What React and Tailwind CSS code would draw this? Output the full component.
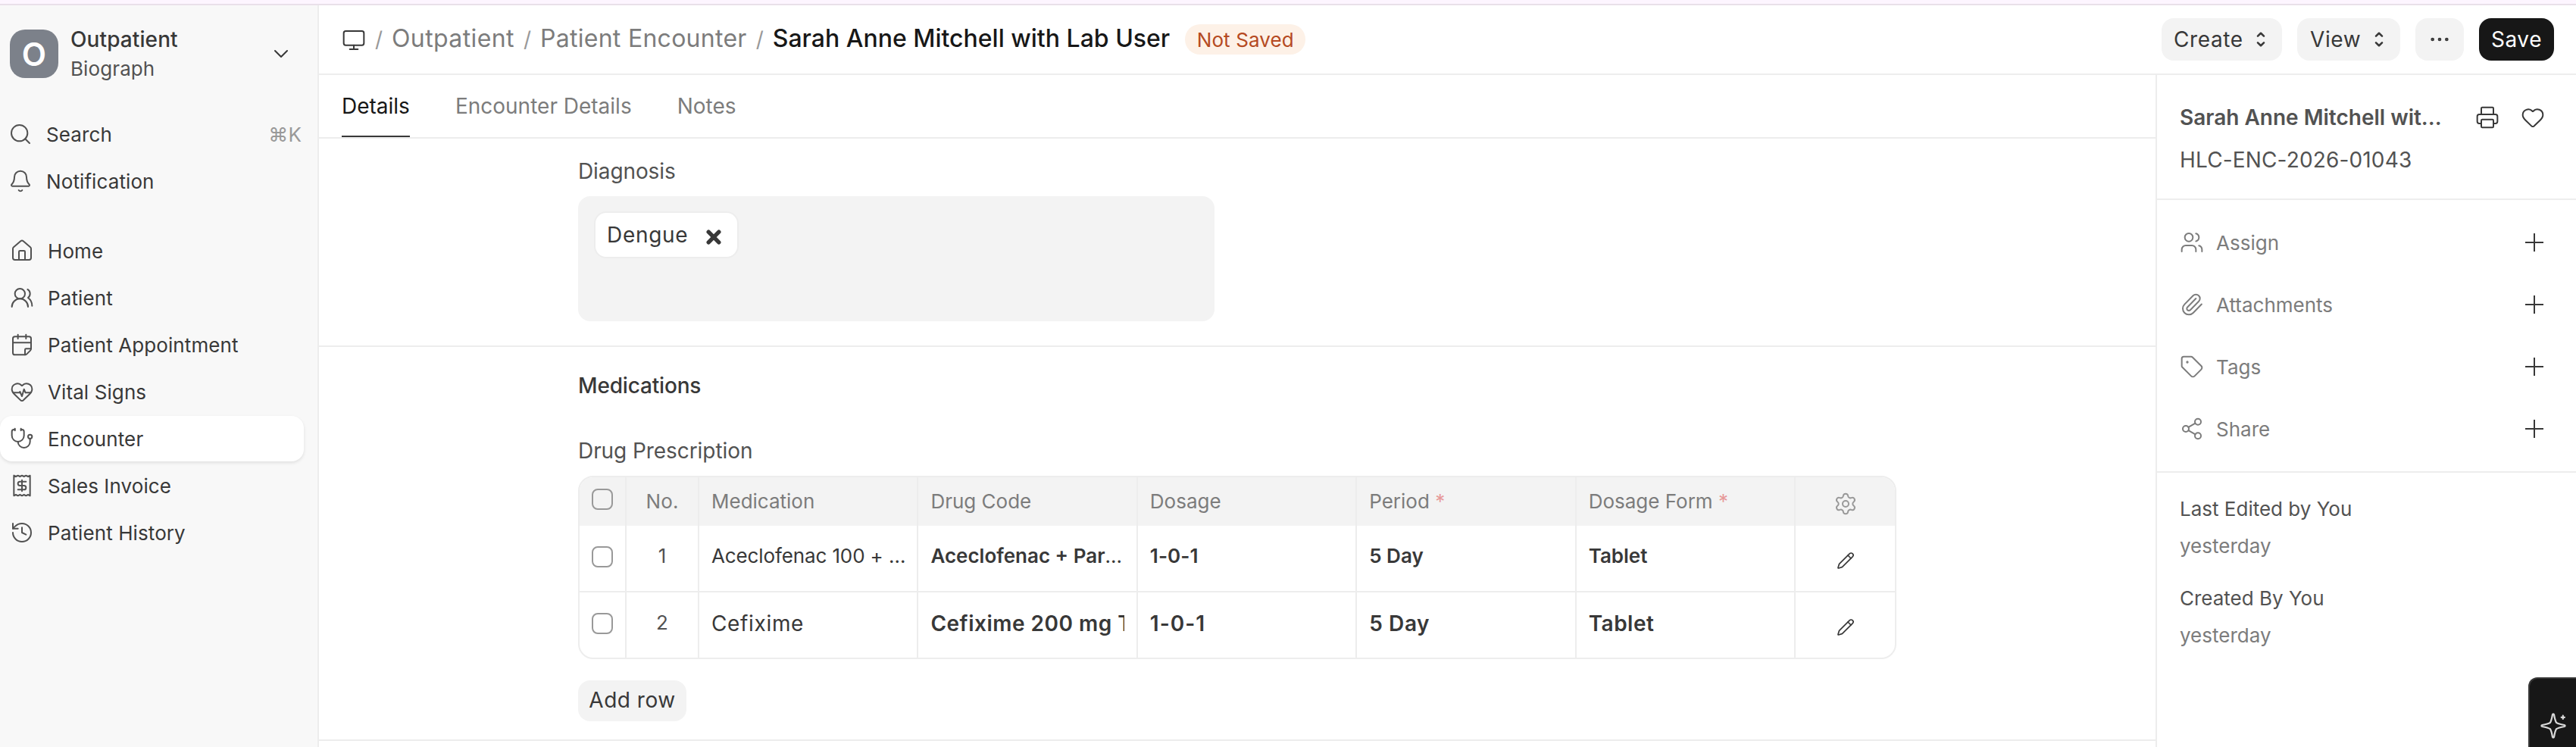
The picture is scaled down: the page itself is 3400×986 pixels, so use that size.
import {
  Bell,
  CalendarFold,
  ChevronDown,
  Ellipsis,
  Heart,
  HeartPulse,
  History,
  House,
  Monitor,
  Paperclip,
  Pencil,
  Printer,
  Receipt,
  Search,
  Settings,
  Share2,
  Stethoscope,
  Tag,
  Users,
  UsersRound,
} from 'lucide-react';

const quickLinks = [
  { label: 'Search', icon: Search, shortcut: '⌘K' },
  { label: 'Notification', icon: Bell },
];

const navLinks = [
  { label: 'Home', icon: House },
  { label: 'Patient', icon: UsersRound },
  { label: 'Patient Appointment', icon: CalendarFold },
  { label: 'Vital Signs', icon: HeartPulse },
  { label: 'Encounter', icon: Stethoscope, active: true },
  { label: 'Sales Invoice', icon: Receipt },
  { label: 'Patient History', icon: History },
];

const tabs = ['Details', 'Encounter Details', 'Notes'];

const columns = [
  { label: 'Medication' },
  { label: 'Drug Code' },
  { label: 'Dosage' },
  { label: 'Period', required: true },
  { label: 'Dosage Form', required: true },
];

const docActions = [
  { label: 'Assign', icon: Users },
  { label: 'Attachments', icon: Paperclip },
  { label: 'Tags', icon: Tag },
  { label: 'Share', icon: Share2 },
];

const SelectArrows = () => (
  <svg width="12" height="20" viewBox="0 0 12 20" fill="none" stroke="#383838" strokeWidth="2.6" strokeLinecap="round" strokeLinejoin="round">
    <path d="M2 5.6 6 1.8l4 3.8M2 14.4l4 3.8 4-3.8" />
  </svg>
);

const PlusIcon = () => (
  <svg width="24" height="24" viewBox="0 0 24 24" stroke="#383838" strokeWidth="2">
    <path d="M12 0v24M0 12h24" />
  </svg>
);

const SparkleIcon = () => (
  <svg width="34" height="34" viewBox="0 0 34 34" fill="none" stroke="#d9d9d9" strokeWidth="2.2" strokeLinejoin="round" strokeLinecap="round">
    <path d="M16 2.3c.3-1.2 1.7-1.2 2 0 1 5.700 1.600 8.300 3.100 10.600 2.300 1.500 4.900 2.100 10.600 3.100 1.200.3 1.200 1.700 0 2-5.700 1-8.300 1.600-10.600 3.100-1.500 2.300-2.100 4.900-3.100 10.600-.3 1.200-1.700 1.200-2 0-1-5.700-1.600-8.300-3.100-10.600C10.600 19.600 8 19 2.300 18c-1.200-.3-1.200-1.700 0-2 5.700-1 8.300-1.600 10.600-3.100C14.400 10.600 15 8 16 2.300Z" />
    <path d="M29.800 3.700v4.200M27.700 5.800h4.200" />
  </svg>
);

const NavRow = ({ item, small }) => {
  const Icon = item.icon;
  return (
    <div
      className={`flex h-[60px] items-center gap-[18px] pr-[3px] ${small ? 'pl-[11px]' : 'pl-[13px]'} ${
        item.active ? 'rounded-2xl bg-white shadow-[0_2px_4px_rgba(0,0,0,0.1)]' : ''
      }`}
    >
      <Icon size={32} strokeWidth={1.5} className="text-[#525252]" />
      <span className="flex-1">{item.label}</span>
      {item.shortcut && <span className="text-[#999999]">{item.shortcut}</span>}
    </div>
  );
};

const Sidebar = () => (
  <aside className="w-[421px] shrink-0 border-r-2 border-[#ededed] bg-[#f8f8f8] pr-[18px] pt-8 text-[26px] tracking-[0.1px] text-[#383838]">
    <div className="flex h-16 items-center pl-[13px] pr-[14px]">
      <div className="flex size-16 items-center justify-center rounded-[20px] bg-[#7c818a] text-[42px] font-semibold text-white">
        O
      </div>
      <div className="ml-4 flex-1">
        <div className="text-[28px] font-medium leading-[38px]">Outpatient</div>
        <div className="mt-px leading-[38px] text-[#525252]">Biograph</div>
      </div>
      <ChevronDown size={32} strokeWidth={1.5} />
    </div>
    <div className="mt-11 flex flex-col gap-0.5">
      {quickLinks.map(item => (
        <NavRow key={item.label} item={item} small />
      ))}
    </div>
    <nav className="mt-8 flex flex-col gap-0.5">
      {navLinks.map(item => (
        <NavRow key={item.label} item={item} />
      ))}
    </nav>
  </aside>
);

const Slash = () => <span className="w-[34px] text-center text-[28px] text-[#999999]">/</span>;

const Header = () => (
  <header className="flex h-[92px] items-center border-b-2 border-[#ededed] pl-[30px] pr-[29px]">
    <Monitor size={32} strokeWidth={1.5} className="mt-0.5 text-[#383838]" />
    <div className="-mt-[3px] flex items-baseline text-[32px] text-[#7c7c7c]">
      <Slash />
      <span className="tracking-[0.4px]">Outpatient</span>
      <Slash />
      <span className="tracking-[0.28px]">Patient Encounter</span>
      <Slash />
      <span className="font-medium text-[#171717]">Sarah Anne Mitchell with Lab User</span>
    </div>
    <span className="ml-5 flex h-10 w-[159px] items-center justify-center rounded-[20px] bg-[#fdf1e7] text-[26px] tracking-[0.1px] text-[#b54a22]">
      Not Saved
    </span>
    <div className="ml-auto flex gap-5 text-[28px] tracking-[0.6px] text-[#383838]">
      <button className="flex h-14 w-[159px] items-center justify-between rounded-2xl bg-[#f3f3f3] pl-4 pr-[22px]">
        Create <SelectArrows />
      </button>
      <button className="flex h-14 w-[136px] items-center justify-between rounded-2xl bg-[#f3f3f3] pl-[17px] pr-[22px]">
        View <SelectArrows />
      </button>
      <button className="flex h-14 w-16 items-center justify-center rounded-2xl bg-[#f3f3f3]">
        <Ellipsis size={32} strokeWidth={1.5} />
      </button>
      <button className="flex h-14 w-[99px] items-center justify-center rounded-2xl bg-[#171717] text-white">Save</button>
    </div>
  </header>
);

const Checkbox = () => <span className="block size-7 rounded-lg border-2 border-[#999999]" />;

const checkCell = 'w-[62px] shrink-0 border-r-2 border-[#ededed] pl-4';
const indexCell = 'w-24 shrink-0 border-r-2 border-[#ededed] text-center leading-10';
const cell = 'min-w-0 flex-1 overflow-hidden whitespace-nowrap border-r-2 border-[#ededed] px-4 leading-10';
const actionCell = 'flex w-[131px] shrink-0 justify-center';

const PrescriptionTable = () => (
  <div className="mt-[13px] w-[1740px] overflow-hidden rounded-[20px] border-2 border-[#ededed] text-[26px] tracking-[0.1px] text-[#383838]">
    <div className="flex h-16 bg-[#f3f3f3] text-[#7c7c7c]">
      <div className={`${checkCell} pt-[15px]`}>
        <Checkbox />
      </div>
      <div className={`${indexCell} pt-3`}>No.</div>
      {columns.map(col => (
        <div key={col.label} className={`${cell} pt-3 tracking-normal`}>
          {col.label}
          {col.required && <span className="text-[#e79a9a]"> *</span>}
        </div>
      ))}
      <div className={`${actionCell} pt-[19px]`}>
        <Settings size={32} strokeWidth={1.5} className="text-[#999999]" />
      </div>
    </div>
    <div className="flex h-[88px] border-b-2 border-[#ededed]">
      <div className={`${checkCell} pt-[27px]`}>
        <Checkbox />
      </div>
      <div className={`${indexCell} pt-5 text-[#525252]`}>1</div>
      <div className={`${cell} pt-5 tracking-[-0.12px]`}>Aceclofenac 100 + …</div>
      <div className={`${cell} pt-5 tracking-normal`}>
        <span className="font-semibold">Aceclofenac + Par</span>…
      </div>
      <div className={`${cell} pt-5 font-semibold`}>1-0-1</div>
      <div className={`${cell} pt-5 font-semibold tracking-normal`}>5 Day</div>
      <div className={`${cell} pt-5 font-semibold tracking-normal`}>Tablet</div>
      <div className={`${actionCell} pt-[34px]`}>
        <Pencil size={24} strokeWidth={1.7} />
      </div>
    </div>
    <div className="flex h-[86px]">
      <div className={`${checkCell} pt-[27px]`}>
        <Checkbox />
      </div>
      <div className={`${indexCell} pt-5 text-[#525252]`}>2</div>
      <div className={`${cell} pt-[21px] text-[28px] tracking-[0.65px]`}>Cefixime</div>
      <div className={`${cell} pt-[21px] text-[28px] font-semibold tracking-[0.5px]`}>
        <div className="overflow-hidden">Cefixime 200 mg Tablet</div>
      </div>
      <div className={`${cell} pt-[21px] text-[28px] font-semibold tracking-[1px]`}>1-0-1</div>
      <div className={`${cell} pt-[21px] text-[28px] font-semibold tracking-[0.6px]`}>5 Day</div>
      <div className={`${cell} pt-[21px] text-[28px] font-semibold tracking-[0.5px]`}>Tablet</div>
      <div className={`${actionCell} pt-[34px]`}>
        <Pencil size={24} strokeWidth={1.7} />
      </div>
    </div>
  </div>
);

const DocSidebar = () => (
  <aside className="w-[555px] shrink-0 border-l-2 border-[#ededed] text-[26px] text-[#7c7c7c]">
    <div className="h-[165px] border-b-2 border-[#ededed] pl-[30px] pr-[41px] pt-[34px] text-[28px] text-[#525252]">
      <div className="flex h-11 items-center">
        <span className="flex-1 font-semibold">Sarah Anne Mitchell wit...</span>
        <Printer size={32} strokeWidth={1.5} className="text-[#383838]" />
        <Heart size={32} strokeWidth={1.5} className="ml-7 text-[#383838]" />
      </div>
      <div className="mt-3 leading-[44px] tracking-[0.15px]">HLC-ENC-2026-01043</div>
    </div>
    <div className="h-[360px] border-b-2 border-[#ededed] pl-[30px] pr-[43px] pt-[15px]">
      {docActions.map(({ label, icon: Icon }) => (
        <div key={label} className="flex h-[82px] items-center">
          <Icon size={32} strokeWidth={1.5} />
          <span className="ml-4 flex-1">{label}</span>
          <PlusIcon />
        </div>
      ))}
    </div>
    <div className="pl-[30px] pt-7 leading-[40px]">
      <div className="text-[#525252]">Last Edited by You</div>
      <div className="mt-[9px]">yesterday</div>
      <div className="mt-[29px] text-[#525252]">Created By You</div>
      <div className="mt-[9px]">yesterday</div>
    </div>
  </aside>
);

export default function App() {
  return (
    <div className="flex h-[986px] flex-col overflow-hidden bg-white font-['Inter',sans-serif]">
      <div className="h-[7px] shrink-0 border-b-2 border-[#e9e0e9] bg-[#fdf5ff]" />
      <div className="flex min-h-0 flex-1">
        <Sidebar />
        <div className="flex min-w-0 flex-1 flex-col">
          <Header />
          <div className="flex min-h-0 flex-1">
            <main className="min-w-0 flex-1">
              <div className="flex h-[84px] gap-[60px] border-b-2 border-[#ededed] pl-[30px] text-[28px] text-[#7c7c7c]">
                {tabs.map((tab, i) => (
                  <div
                    key={tab}
                    className={`flex items-center ${i === 0 ? 'border-b-2 border-[#383838] pt-0.5 text-[#171717]' : ''}`}
                  >
                    {tab}
                  </div>
                ))}
              </div>
              <section className="h-[275px] border-b-2 border-[#ededed] pl-[342px] pt-[23px] text-[28px] text-[#525252]">
                <div className="leading-10 tracking-[-0.1px]">Diagnosis</div>
                <div className="mt-[13px] h-[165px] w-[840px] rounded-2xl bg-[#f3f3f3] pl-[21px] pt-5">
                  <div className="flex h-[62px] w-[191px] items-center justify-between rounded-2xl border-2 border-[#ededed] bg-white pl-[15px] pr-[21px] tracking-[0.7px] text-[#383838]">
                    Dengue
                    <svg width="20" height="20" viewBox="0 0 20 20" className="mt-1.5" stroke="#383838" strokeWidth="5.4" strokeLinecap="round">
                      <path d="m3.200 3.200 13.600 13.600M16.800 3.200 3.200 16.800" />
                    </svg>
                  </div>
                </div>
              </section>
              <section className="h-[520px] border-b-2 border-[#ededed] pl-[342px] pt-[31px] text-[28px] text-[#525252]">
                <div className="font-medium leading-10 tracking-[-0.17px] text-[#383838]">Medications</div>
                <div className="mt-[46px] leading-10 tracking-[-0.07px]">Drug Prescription</div>
                <PrescriptionTable />
                <button className="mt-7 flex h-[54px] w-[143px] items-center justify-center rounded-2xl bg-[#f3f3f3] pb-0.5 tracking-[0.5px] text-[#383838]">
                  Add row
                </button>
              </section>
            </main>
            <DocSidebar />
          </div>
        </div>
      </div>
      <div className="absolute left-[3337px] top-[894px] h-[92px] w-[63px] rounded-tl-xl border-l-2 border-t-2 border-[#383838] bg-[#171717] pl-[14px] pt-[45px]">
        <SparkleIcon />
      </div>
    </div>
  );
}
